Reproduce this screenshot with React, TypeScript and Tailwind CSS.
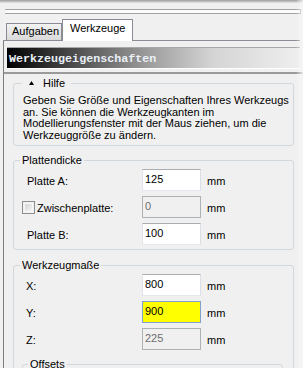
import React from "react";

const Input = ({ value, variant = "normal" }: { value: string; variant?: "normal" | "focus" | "disabled" }) => {
  const cls =
    variant === "focus"
      ? "bg-[#ffff00] border-[#7da2ce] text-black"
      : variant === "disabled"
      ? "bg-[#f0f0f0] border-[#adb2b5] text-[#6d6d6d]"
      : "bg-white border-[#abadb3] border-b-[#e3e9ef] border-r-[#dbdfe6] border-l-[#e2e3ea] text-black";
  return (
    <div className={`w-[59px] h-[22px] border pl-[2px] pt-[3px] leading-[13px] ${cls}`}>{value}</div>
  );
};

const Row = ({ label, children, indent = "pl-[5px]" }: { label: React.ReactNode; children: React.ReactNode; indent?: string }) => (
  <div className="flex items-center h-[22px]">
    <div className={`w-[120px] mt-[3px] ${indent}`}>{label}</div>
    {children}
    <div className="ml-[6px] mt-[3px]">mm</div>
  </div>
);

export default function App() {
  return (
    <div className="relative w-[303px] h-[368px] overflow-hidden bg-[#f0f0f0] text-[11px] leading-[13px] text-black font-['Liberation_Sans',Arial,sans-serif]">
      <div className="h-[3px] bg-gradient-to-b from-[#9c9c9c] to-[#e6e6e6]" />
      <div className="mt-[6px] ml-[5px] w-[296px] h-[5px] border-t border-b border-r border-[#a3a3a3] bg-[#fbfbfb]" />
      <div className="mt-[5px] mx-[3px] h-[22px] flex items-end border-b border-[#898c95] pl-[3px]">
        <div className="h-[17px] w-[56px] border border-b-0 border-[#898c95] bg-gradient-to-b from-[#f3f3f3] to-[#d9d9d9] pl-[5px] pt-[1px]">
          Aufgaben
        </div>
        <div className="h-[22px] w-[71px] -mb-px border border-b-0 border-[#898c95] bg-white pl-[7px] pt-[2px]">
          Werkzeuge
        </div>
      </div>
      <div className="ml-[3px] h-[340px] border-l border-[#7d7d7d]">
        <div className="pt-[6px] pl-[3px] pr-[3px]">
          <div className="h-[21px] border-t border-[#a8a8a8] bg-[linear-gradient(to_right,#000000_0%,#4a4a4a_22%,#9c9c9c_48%,#d4d4d4_70%,#efefef_100%)] pl-[2px] pt-[5px] leading-[13px] font-['Liberation_Mono','Courier_New',monospace] font-bold text-[11.7px] text-[#eaf0f8]">
            Werkzeugeigenschaften
          </div>
          <div className="h-px bg-white" />
        </div>
        <div className="mt-[3px] border-t-2 border-[#9a9a9a] pl-[9px] pt-[1px]">
          {/* Hilfe */}
          <fieldset className="mt-[2px] w-[281px] border border-[#d0d8dd] rounded-[3px]">
            <legend className="ml-[8px] pl-[7px] pr-[6px] leading-[13px] flex items-center">
              <svg width="5" height="4" viewBox="0 0 5 4" className="mb-px">
                <polygon points="2.5,0 5,4 0,4" fill="#000" />
              </svg>
              <span className="ml-[9px]">Hilfe</span>
            </legend>
            <div className="pl-[9px] pt-[5px] pb-[3px] leading-[11.67px] whitespace-nowrap">
              Geben Sie Größe und Eigenschaften Ihres Werkzeugs
              <br />
              an. Sie können die Werkzeugkanten im
              <br />
              Modellierungsfenster mit der Maus ziehen, um die
              <br />
              Werkzeuggröße zu ändern.
            </div>
          </fieldset>

          {/* Plattendicke */}
          <fieldset className="mt-[8px] w-[281px] border border-[#d0d8dd] rounded-[3px]">
            <legend className="ml-[6px] px-[2px] leading-[13px]">Plattendicke</legend>
            <div className="pl-[8px] pt-[2px] pb-[4px] flex flex-col gap-[5px]">
              <Row label="Platte A:">
                <Input value="125" />
              </Row>
              <Row
                indent="pl-0"
                label={
                  <div className="flex items-center -mt-[1px]">
                    <div className="w-[13px] h-[13px] border border-[#8f8f8f] p-px">
                      <div className="w-full h-full bg-gradient-to-br from-[#d4d4d4] to-[#f4f4f4] border border-[#f7f7f7]" />
                    </div>
                    <span className="ml-[2px] mt-[1px]">Zwischenplatte:</span>
                  </div>
                }
              >
                <Input value="0" variant="disabled" />
              </Row>
              <Row label="Platte B:">
                <Input value="100" />
              </Row>
            </div>
          </fieldset>

          {/* Werkzeugmaße */}
          <fieldset className="mt-[9px] w-[281px] border border-[#d0d8dd] rounded-[3px]">
            <legend className="ml-[6px] px-[2px] leading-[13px]">Werkzeugmaße</legend>
            <div className="pl-[8px] pt-[2px] pb-[4px]">
              <div className="flex flex-col gap-[5px]">
                <Row label="X:" indent="pl-[4px]">
                  <Input value="800" />
                </Row>
                <Row label="Y:" indent="pl-[4px]">
                  <Input value="900" variant="focus" />
                </Row>
                <Row label="Z:" indent="pl-[4px]">
                  <Input value="225" variant="disabled" />
                </Row>
              </div>
              <fieldset className="mt-[8px] w-[261px] h-[40px] border border-[#d0d8dd] rounded-[3px]">
                <legend className="ml-[5px] px-[2px] leading-[13px]">Offsets</legend>
              </fieldset>
            </div>
          </fieldset>
        </div>
      </div>
      <div className="absolute right-0 top-0 bottom-0 w-[7px] bg-gradient-to-r from-transparent to-[#f7f7f7]/80" />
    </div>
  );
}
